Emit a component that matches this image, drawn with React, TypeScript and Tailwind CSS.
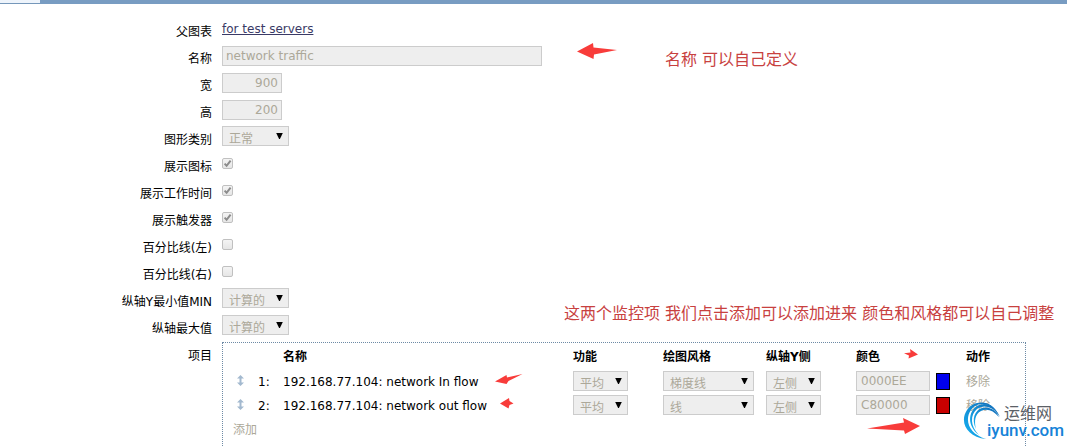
import type { ReactNode } from "react";

const fieldStyle =
  "h-5 border border-[#cccccc] bg-[#eeeeee] text-[12px] leading-[18px] text-[#aca899]";

function Row({ label, htmlFor, children }: { label: string; htmlFor?: string; children: ReactNode }) {
  return (
    <div className="flex min-h-[27px] items-start">
      <label htmlFor={htmlFor} className="w-[212px] shrink-0 pt-2 text-right leading-[18px]">
        {label}
      </label>
      <div className="ml-2.5 flex min-h-[27px] min-w-0 items-center">{children}</div>
    </div>
  );
}

function DisabledSelect({ id, name, value, width }: { id?: string; name?: string; value: string; width: string }) {
  return (
    <span className={`relative block -mt-px ${width}`}>
      <select
        id={id}
        aria-label={name}
        disabled
        defaultValue={value}
        className={`${fieldStyle} block w-full appearance-none pt-[3px] pl-1.5 opacity-100`}
      >
        <option>{value}</option>
      </select>
      <svg
        className="pointer-events-none absolute top-[7px] right-1.5"
        width="7"
        height="6"
        viewBox="0 0 7 6"
        aria-hidden="true"
      >
        <path d="M0.2 0H6.8L3.9 6H3.1Z" fill="#000" />
      </svg>
    </span>
  );
}

function Check({ id, checked }: { id: string; checked?: boolean }) {
  return (
    <span className="relative block size-[11px]">
      <input
        id={id}
        type="checkbox"
        disabled
        defaultChecked={checked}
        className="block size-[11px] appearance-none rounded-xs border border-[#c0c0c0] bg-linear-to-b from-[#f4f4f4] to-[#e6e6e6]"
      />
      {checked && (
        <svg className="pointer-events-none absolute inset-0" width="11" height="11" viewBox="0 0 11 11" aria-hidden="true">
          <path d="M2.6 5.6L4.6 7.8L8.6 2.6" fill="none" stroke="#8c8c8c" strokeWidth="2" />
        </svg>
      )}
    </span>
  );
}

function SortHandle() {
  return (
    <svg width="7" height="11" viewBox="0 0 7 11" aria-hidden="true" className="block">
      <path d="M3.5 0L7 3.4H4.5V7.6H7L3.5 11L0 7.6H2.5V3.4H0Z" fill="#a3b9cf" />
    </svg>
  );
}

const items = [
  { no: "1:", name: "192.168.77.104: network In flow", style: "梯度线", color: "0000EE", swatch: "bg-[#0000ee]" },
  { no: "2:", name: "192.168.77.104: network out flow", style: "线", color: "C80000", swatch: "bg-[#c80000]" },
];

function ItemsTable() {
  return (
    <div className="mt-[3px] h-[140px] w-[804px] border border-dotted border-[#6d8aa5]">
      <table className="w-full table-fixed border-collapse text-left">
        <colgroup>
          <col className="w-[35px]" />
          <col className="w-[25px]" />
          <col className="w-[290px]" />
          <col className="w-[90px]" />
          <col className="w-[103px]" />
          <col className="w-[90px]" />
          <col className="w-[110px]" />
          <col />
        </colgroup>
        <thead>
          <tr className="h-[26px]">
            <th className="p-0" />
            <th className="p-0" />
            <th className="p-0 pt-0.5">名称</th>
            <th className="p-0 pt-0.5">功能</th>
            <th className="p-0 pt-0.5">绘图风格</th>
            <th className="p-0 pt-0.5">纵轴Y侧</th>
            <th className="p-0 pt-0.5">颜色</th>
            <th className="p-0 pt-0.5">动作</th>
          </tr>
        </thead>
        <tbody>
          {items.map((item) => (
            <tr key={item.no} className="h-6">
              <td className="p-0 pb-0.5 pl-3.5">
                <SortHandle />
              </td>
              <td className="p-0 pt-0.5">{item.no}</td>
              <td className="p-0 pt-0.5">{item.name}</td>
              <td className="p-0">
                <DisabledSelect name="功能" value="平均" width="w-[55px]" />
              </td>
              <td className="p-0">
                <DisabledSelect name="绘图风格" value={item.style} width="w-[91px]" />
              </td>
              <td className="p-0">
                <DisabledSelect name="纵轴Y侧" value="左侧" width="w-[55px]" />
              </td>
              <td className="p-0">
                <div className="flex items-center gap-1.5">
                  <input
                    aria-label="颜色"
                    disabled
                    defaultValue={item.color}
                    className={`${fieldStyle} w-[74px] px-1`}
                  />
                  <span className={`h-[17px] w-3.5 border border-black ${item.swatch}`} />
                </div>
              </td>
              <td className="p-0 pt-0.5">
                <button type="button" disabled className="block text-[#aca899]">
                  移除
                </button>
              </td>
            </tr>
          ))}
        </tbody>
      </table>
      <button type="button" disabled className="mt-1 ml-2.5 block text-[#aca899]">
        添加
      </button>
    </div>
  );
}

function Annotations() {
  return (
    <div className="pointer-events-none absolute inset-0 text-[16px] leading-6 text-[#c8413f]">
      <p className="absolute top-12 left-[665px] whitespace-nowrap">名称 可以自己定义</p>
      <p className="absolute top-[302px] left-[564px] whitespace-nowrap">
        这两个监控项 我们点击添加可以添加进来 颜色和风格都可以自己调整
      </p>
      <svg className="absolute top-0 left-0" width="1067" height="447" viewBox="0 0 1067 447" aria-hidden="true">
        <g fill="#f83c3a">
          <path d="M577 51.5L593 43L593.5 47.5L617 50L594 54.5L593.5 59Z" />
          <path d="M495 381.5L506.5 375L507 377.5L522.5 374L508.5 381L506.5 384Z" />
          <path d="M500 403.5L509 398L509.5 401L513.5 403.5L509.5 405L508.5 408.5Z" />
          <path d="M904 353.2L910.5 352.5L910 349L918 354.5L908.5 358.5L909 355.5Z" />
          <path d="M867 428.5L904 422.5L903 418L920 426L905 434L904 430.5Z" />
        </g>
      </svg>
    </div>
  );
}

function Watermark() {
  return (
    <div className="pointer-events-none absolute top-[400px] left-[963px] h-10 w-[100px]">
      <svg className="absolute top-0 left-0" width="40" height="40" viewBox="0 0 40 40" aria-hidden="true">
        <defs>
          <linearGradient id="ring" x1="0" y1="1" x2="1" y2="0">
            <stop offset="0" stopColor="#16b4f4" />
            <stop offset="1" stopColor="#1167b4" />
          </linearGradient>
        </defs>
        <g fill="url(#ring)">
          <path d="M23 39C4 37 -4 22 4 10C11 -1 30 -1 36 16C30 3 15 0 8 10C1 20 6 34 23 39Z" />
          <path d="M16 35C4 26 5 12 14 6C22 1 32 5 37 17C30 6 21 4 14 9C7 15 7 26 16 35Z" />
          <path d="M13 29C8 19 12 10 19 8C26 6 33 10 36 17C30 10 24 8 18 11C12 14 11 21 13 29Z" />
        </g>
      </svg>
      <div className="absolute top-1.5 left-6 flex flex-col">
        <span className="pl-[17px] text-[16px] leading-4 whitespace-nowrap text-[#5b6066]">运维网</span>
        <span className="font-[Roboto] text-[17px] leading-4 font-medium text-[#1683d8]">iyunv.com</span>
      </div>
    </div>
  );
}

export default function App() {
  return (
    <div className="relative h-screen overflow-hidden bg-white font-['DejaVu_Sans','Noto_Sans_CJK_SC',sans-serif] text-[12px] leading-[18px] text-black">
      <div className="flex h-1">
        <div className="w-10 border-b border-[#7597ba] bg-[#eef4fb]" />
        <div className="flex-1 bg-[#789cc2]" />
      </div>
      <form className="pt-[11px]">
        <Row label="父图表">
          <a href="#parent" className="text-[#3a3a66] underline">
            for test servers
          </a>
        </Row>
        <Row label="名称" htmlFor="name">
          <input id="name" disabled defaultValue="network traffic" className={`${fieldStyle} w-80 px-[3px]`} />
        </Row>
        <Row label="宽" htmlFor="width">
          <input id="width" disabled defaultValue="900" className={`${fieldStyle} w-15 px-[3px] text-right`} />
        </Row>
        <Row label="高" htmlFor="height">
          <input id="height" disabled defaultValue="200" className={`${fieldStyle} w-15 px-[3px] text-right`} />
        </Row>
        <Row label="图形类别" htmlFor="type">
          <DisabledSelect id="type" value="正常" width="w-[67px]" />
        </Row>
        <Row label="展示图标" htmlFor="legend">
          <Check id="legend" checked />
        </Row>
        <Row label="展示工作时间" htmlFor="worktime">
          <Check id="worktime" checked />
        </Row>
        <Row label="展示触发器" htmlFor="triggers">
          <Check id="triggers" checked />
        </Row>
        <Row label="百分比线(左)" htmlFor="left">
          <Check id="left" />
        </Row>
        <Row label="百分比线(右)" htmlFor="right">
          <Check id="right" />
        </Row>
        <Row label="纵轴Y最小值MIN" htmlFor="ymin">
          <DisabledSelect id="ymin" value="计算的" width="w-[67px]" />
        </Row>
        <Row label="纵轴最大值" htmlFor="ymax">
          <DisabledSelect id="ymax" value="计算的" width="w-[67px]" />
        </Row>
        <Row label="项目">
          <ItemsTable />
        </Row>
      </form>
      <Annotations />
      <Watermark />
    </div>
  );
}
